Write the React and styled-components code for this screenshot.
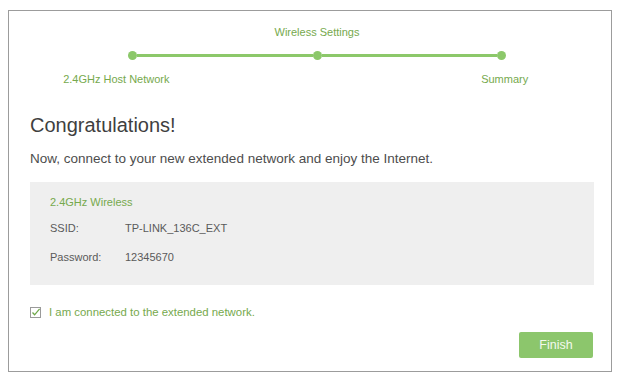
import styled, { createGlobalStyle } from 'styled-components';

const GlobalStyle = createGlobalStyle`
  html, body {
    margin: 0;
    padding: 0;
    background: #fff;
  }
  body {
    font-family: 'Liberation Sans', Arial, sans-serif;
  }
`;

const Frame = styled.div`
  box-sizing: border-box;
  width: 604px;
  height: 362px;
  margin: 10px 0 0 8px;
  border: 1px solid #9c9c9c;
  padding: 14px 17px 13px 21px;
  display: flex;
  flex-direction: column;
`;

const Stepper = styled.div`
  padding-left: 10px;
  display: grid;
  grid-template-columns: repeat(3, 1fr);
  row-gap: 12px;
`;

const StepLabel = styled.div`
  grid-column: ${(p) => p.col};
  grid-row: ${(p) => p.row};
  justify-self: center;
  font-size: 11px;
  line-height: 14px;
  color: #76a94d;
  white-space: nowrap;
  transform: translateX(${(p) => p.shift || 0}px);
`;

const Track = styled.div`
  grid-column: 1 / 4;
  grid-row: 2;
  display: flex;
  align-items: center;
  margin: 0 calc(100% / 6 - 4.5px);
`;

const Dot = styled.span`
  width: 9px;
  height: 9px;
  border-radius: 50%;
  background: #8cc86a;
  flex-shrink: 0;
`;

const Line = styled.span`
  flex: 1;
  height: 3px;
  background: #8cc86a;
`;

const Title = styled.h2`
  margin: 27px 0 0;
  font-size: 20px;
  line-height: 24px;
  font-weight: normal;
  color: #3f3f3f;
`;

const Lead = styled.p`
  margin: 14px 0 0;
  font-size: 13.5px;
  line-height: 16px;
  color: #4d4d4d;
`;

const InfoBox = styled.div`
  margin-top: 15px;
  height: 103px;
  box-sizing: border-box;
  background: #efefef;
  padding: 13px 20px 0;
  display: flex;
  flex-direction: column;
  gap: 12px;
`;

const BoxTitle = styled.div`
  font-size: 11px;
  line-height: 14px;
  color: #76a94d;
`;

const InfoRow = styled.div`
  display: flex;
  font-size: 11px;
  line-height: 14px;
  color: #5a5a5a;
  margin-top: ${(p) => p.gap || 0}px;
`;

const InfoKey = styled.span`
  width: 75px;
  flex-shrink: 0;
`;

const CheckRow = styled.label`
  margin-top: 20px;
  display: flex;
  align-items: center;
  gap: 8px;
  font-size: 11.4px;
  line-height: 14px;
  color: #76a94d;
`;

const Actions = styled.div`
  margin-top: auto;
  display: flex;
  justify-content: flex-end;
  padding-right: 1px;
`;

const FinishButton = styled.button`
  width: 74px;
  height: 26px;
  border: none;
  border-radius: 2px;
  background: #8cc66c;
  color: #f3f9ee;
  font-family: inherit;
  font-size: 12.5px;
  cursor: pointer;
`;

const CheckIcon = () => (
  <svg width="11" height="11" viewBox="0 0 11 11">
    <rect x="0.5" y="0.5" width="10" height="10" fill="#fff" stroke="#9a9a9a" />
    <path d="M2.5 5.5 L4.6 7.8 L9.6 1.8" fill="none" stroke="#6fa84a" strokeWidth="1.3" />
  </svg>
);

const App = () => {
  return (
    <>
      <GlobalStyle />
      <Frame>
        <Stepper>
          <StepLabel col={2} row={1}>Wireless Settings</StepLabel>
          <Track>
            <Dot />
            <Line />
            <Dot />
            <Line />
            <Dot />
          </Track>
          <StepLabel col={1} row={3} shift={-16}>2.4GHz Host Network</StepLabel>
          <StepLabel col={3} row={3} shift={3}>Summary</StepLabel>
        </Stepper>

        <Title>Congratulations!</Title>
        <Lead>Now, connect to your new extended network and enjoy the Internet.</Lead>

        <InfoBox>
          <BoxTitle>2.4GHz Wireless</BoxTitle>
          <InfoRow>
            <InfoKey>SSID:</InfoKey>
            <span>TP-LINK_136C_EXT</span>
          </InfoRow>
          <InfoRow gap={3}>
            <InfoKey>Password:</InfoKey>
            <span>12345670</span>
          </InfoRow>
        </InfoBox>

        <CheckRow>
          <CheckIcon />
          <span>I am connected to the extended network.</span>
        </CheckRow>

        <Actions>
          <FinishButton>Finish</FinishButton>
        </Actions>
      </Frame>
    </>
  );
};

export default App;
